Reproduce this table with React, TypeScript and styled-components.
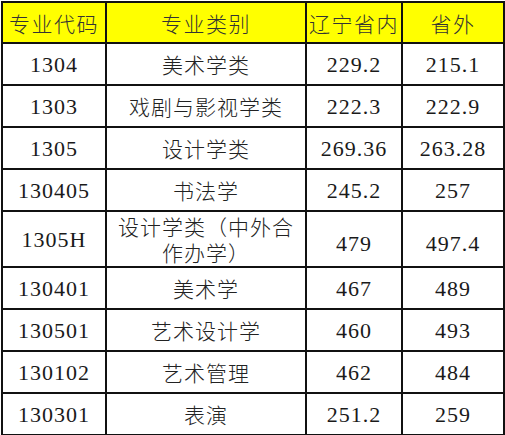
import React from "react";
import styled, { createGlobalStyle } from "styled-components";

interface IRow {
  code: string;
  name: React.ReactNode;
  local: string;
  outside: string;
  tall?: boolean;
}

const rows: IRow[] = [
  { code: "1304", name: "美术学类", local: "229.2", outside: "215.1" },
  { code: "1303", name: "戏剧与影视学类", local: "222.3", outside: "222.9" },
  { code: "1305", name: "设计学类", local: "269.36", outside: "263.28" },
  { code: "130405", name: "书法学", local: "245.2", outside: "257" },
  {
    code: "1305H",
    name: (
      <>
        设计学类（中外合
        <br />
        作办学）
      </>
    ),
    local: "479",
    outside: "497.4",
    tall: true,
  },
  { code: "130401", name: "美术学", local: "467", outside: "489" },
  { code: "130501", name: "艺术设计学", local: "460", outside: "493" },
  { code: "130102", name: "艺术管理", local: "462", outside: "484" },
  { code: "130301", name: "表演", local: "251.2", outside: "259" },
];

const App = () => {
  return (
    <>
      <GlobalStyle />
      <Wrapper>
        <Table>
          <colgroup>
            <col style={{ width: 104 }} />
            <col style={{ width: 200 }} />
            <col style={{ width: 96 }} />
            <col style={{ width: 102 }} />
          </colgroup>
          <thead>
            <HeadRow>
              <HeadCell>专业代码</HeadCell>
              <HeadCell>专业类别</HeadCell>
              <HeadCell>辽宁省内</HeadCell>
              <HeadCell>省外</HeadCell>
            </HeadRow>
          </thead>
          <tbody>
            {rows.map((r) => (
              <BodyRow key={r.code} $tall={r.tall}>
                <NumCell>{r.code}</NumCell>
                <NameCell>{r.name}</NameCell>
                <NumCell $low={r.tall}>{r.local}</NumCell>
                <NumCell $low={r.tall}>{r.outside}</NumCell>
              </BodyRow>
            ))}
          </tbody>
        </Table>
      </Wrapper>
    </>
  );
};

export default App;

// ****  STYLED COMPONENTS  ****

const GlobalStyle = createGlobalStyle`
  body {
    margin: 0;
    background: #fff;
  }
`;

const Wrapper = styled.div`
  width: 505px;
  height: 435px;
  padding: 1px 0 0 1px;
  box-sizing: border-box;
  background: #fff;
`;

const Table = styled.table`
  border-collapse: collapse;
  table-layout: fixed;
  width: 502px;
  color: #1a1a1a;
`;

const HeadRow = styled.tr`
  height: 41px;
  background: #ffff00;
`;

const BodyRow = styled.tr<{ $tall?: boolean }>`
  height: ${(p) => (p.$tall ? "56px" : "42px")};
`;

const Cell = styled.td`
  border: 2px solid #111;
  padding: 0 2px;
  text-align: center;
  vertical-align: middle;
  white-space: nowrap;
  overflow: hidden;
`;

const HeadCell = styled(Cell).attrs({ as: "th" })`
  font-family: "Noto Sans CJK SC", sans-serif;
  font-size: 21px;
  font-weight: 300;
  color: #333;
  letter-spacing: 1.5px;
`;

const NameCell = styled(Cell)`
  font-family: "Noto Sans CJK SC", sans-serif;
  font-size: 21px;
  font-weight: 300;
  line-height: 26px;
  color: #222;
  letter-spacing: 1px;
`;

const NumCell = styled(Cell)<{ $low?: boolean }>`
  font-family: "Liberation Serif", "Noto Sans CJK SC", serif;
  font-size: 22px;
  font-weight: 400;
  letter-spacing: 1px;
  padding-top: ${(p) => (p.$low ? "10px" : "2px")};
`;
